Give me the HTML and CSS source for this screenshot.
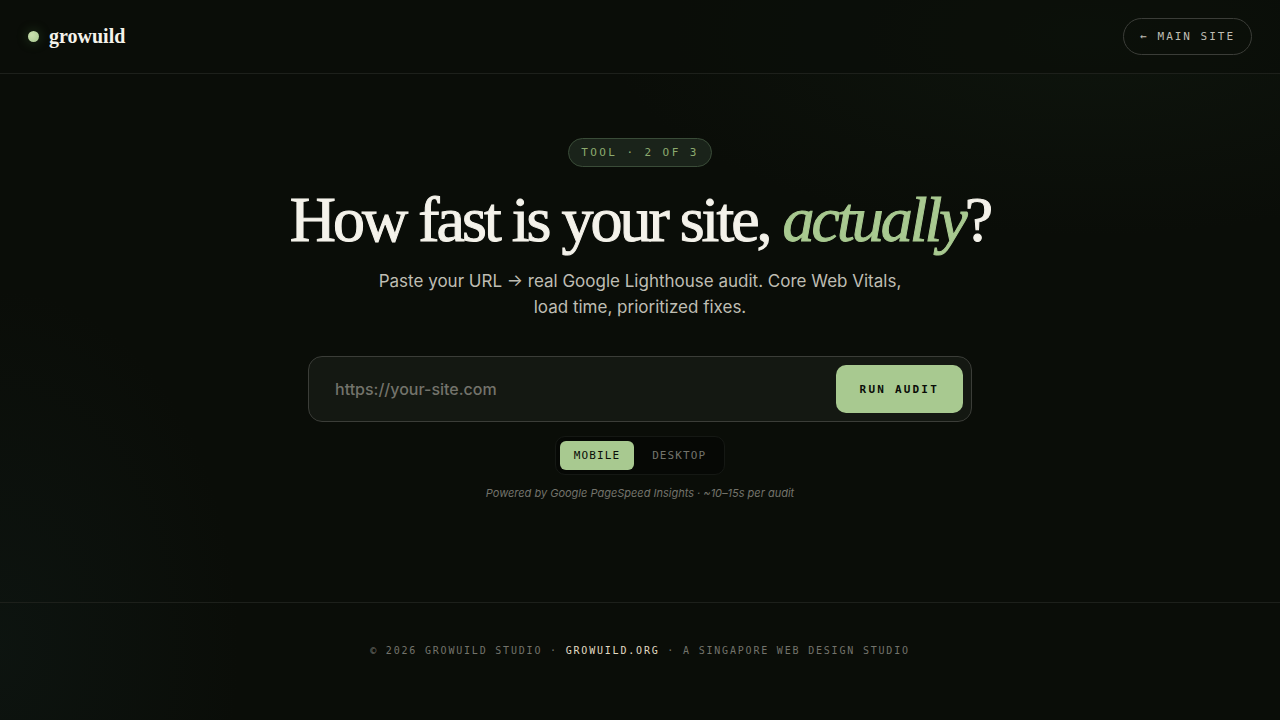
FILE: index.html
```html
<!DOCTYPE html>
<html lang="en">
  <head>
    <meta charset="utf-8">
    <meta name="viewport" content="width=device-width, initial-scale=1.0">
    <title>Site Speed Audit | growuild</title>
    <link rel="stylesheet" href="styles.css">
  </head>

  <body>

    <header class="topbar">
      <a class="brand" href="#"><span class="brand-dot"></span>growuild</a>
      <a class="back-link" href="#">← Main site</a>
    </header>

    <main class="hero">
      <span class="tag">Tool · 2 of 3</span>
      <h1>How fast is your site, <em>actually</em>?</h1>
      <p class="sub">Paste your URL → real Google Lighthouse audit. Core Web Vitals, load time, prioritized fixes.</p>

      <form class="audit-form">
        <input type="url" id="url" placeholder="https://your-site.com" aria-label="Website URL">
        <button type="submit" class="run">Run audit</button>
      </form>

      <div class="toggle">
        <button type="button" class="active">Mobile</button>
        <button type="button">Desktop</button>
      </div>

      <p class="note">Powered by Google PageSpeed Insights · ~10–15s per audit</p>
    </main>

    <footer class="footer">
      © 2026 Growuild Studio · <a href="#">growuild.org</a> · A Singapore web design studio
    </footer>

  </body>
</html>
```

FILE: styles.css
```css
:root{
  --bg: #0a0d08;
  --text: #f4f2ea;
  --soft: #bfbdb3;
  --muted: #73736b;
  --green: #a8c990;
  --line: #1d201b;
  --line-strong: #3b3d38;
  --serif: "Liberation Serif", serif;
  --sans: Inter, sans-serif;
  --mono: "DejaVu Sans Mono", monospace;
}

*{
  box-sizing: border-box;
  margin: 0;
  padding: 0;
}

body{
  min-height: 100vh;
  display: flex;
  flex-direction: column;
  background-color: var(--bg);
  background-image:
    radial-gradient(ellipse 480px 200px at 85% 5%, rgba(30,50,32,0.2), transparent 100%),
    radial-gradient(ellipse 240px 360px at 0% 90%, rgba(26,50,50,0.18), transparent 100%);
  color: var(--text);
  font-family: var(--sans);
}

a{
  color: inherit;
  text-decoration: none;
}

.topbar{
  display: flex;
  align-items: center;
  justify-content: space-between;
  padding: 18px 28px;
  background-color: rgba(10,13,8,0.6);
  border-bottom: 1px solid var(--line);
}

.brand{
  display: flex;
  align-items: center;
  gap: 10px;
  font-family: var(--serif);
  font-size: 20px;
  font-weight: 700;
}

.brand-dot{
  width: 11px;
  height: 11px;
  border-radius: 50%;
  background: radial-gradient(circle at 35% 35%, #cbe0b0, #a8c990);
  box-shadow: 0 0 12px rgba(80,140,70,0.4);
}

.back-link{
  padding: 0 16px;
  border: 1px solid var(--line-strong);
  border-radius: 20px;
  color: var(--soft);
  font-family: var(--mono);
  font-size: 11px;
  line-height: 35px;
  letter-spacing: 0.18em;
  text-transform: uppercase;
}

.hero{
  flex: 1;
  display: flex;
  flex-direction: column;
  align-items: center;
  padding: 64px 28px 100px;
  text-align: center;
}

.tag{
  padding: 0 12px;
  border: 1px solid #3a4c38;
  border-radius: 20px;
  background-color: #1a231a;
  color: #8caa6e;
  font-family: var(--mono);
  font-size: 11px;
  line-height: 27px;
  letter-spacing: 0.22em;
  text-transform: uppercase;
}

h1{
  margin-top: 21px;
  font-family: var(--serif);
  font-size: 64px;
  font-weight: 400;
  line-height: 64px;
  letter-spacing: -3px;
  -webkit-text-stroke: 1px currentColor;
}

h1 em{
  color: var(--green);
}

.sub{
  max-width: 560px;
  margin-top: 16px;
  color: var(--soft);
  font-size: 17px;
  line-height: 26px;
}

.audit-form{
  display: flex;
  width: 100%;
  max-width: 664px;
  margin-top: 36px;
  padding: 8px;
  border: 1px solid var(--line-strong);
  border-radius: 14px;
  background-color: #141812;
}

.audit-form input{
  flex: 1;
  min-width: 0;
  padding: 0 18px;
  border: none;
  outline: none;
  background: none;
  color: var(--text);
  font-family: var(--sans);
  font-size: 16px;
  font-weight: 500;
}

.audit-form input::placeholder{
  color: var(--muted);
}

button{
  border: none;
  cursor: pointer;
  font-family: var(--mono);
  font-size: 11px;
  text-transform: uppercase;
}

.run{
  height: 48px;
  padding: 0 24px;
  border-radius: 10px;
  background-color: var(--green);
  color: var(--bg);
  font-weight: 700;
  letter-spacing: 0.2em;
}

.toggle{
  display: flex;
  gap: 4px;
  margin-top: 14px;
  padding: 4px;
  border: 1px solid #151814;
  border-radius: 10px;
  background-color: #060805;
}

.toggle button{
  height: 29px;
  padding: 0 14px;
  border-radius: 6px;
  background: none;
  color: var(--muted);
  letter-spacing: 0.1em;
}

.toggle .active{
  background-color: var(--green);
  color: var(--bg);
}

.note{
  margin-top: 10px;
  color: var(--muted);
  font-size: 11px;
  font-style: italic;
  line-height: 16px;
}

.footer{
  padding: 40px 28px 62px;
  border-top: 1px solid var(--line);
  color: var(--muted);
  font-family: var(--mono);
  font-size: 10px;
  line-height: 15px;
  letter-spacing: 0.18em;
  text-align: center;
  text-transform: uppercase;
}

.footer a{
  color: #e2dcc4;
}
```
